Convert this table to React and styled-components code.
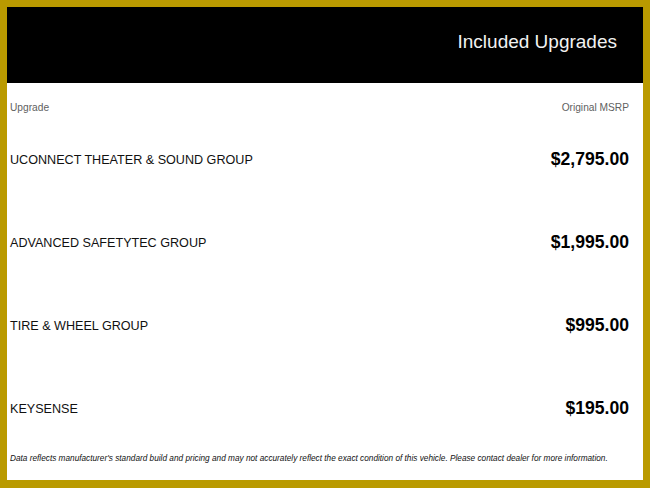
import React from 'react';
import styled, { createGlobalStyle } from 'styled-components';

const GlobalStyle = createGlobalStyle`
  html, body {
    margin: 0;
    padding: 0;
    background: #ba9a00;
  }
`;

const Frame = styled.div`
  box-sizing: border-box;
  width: 650px;
  height: 488px;
  border: 7px solid #ba9a00;
  border-bottom-width: 8px;
  background: #ffffff;
  display: flex;
  flex-direction: column;
`;

const Header = styled.header`
  height: 76px;
  box-sizing: border-box;
  background: #000000;
  display: flex;
  align-items: center;
  justify-content: flex-end;
  padding: 0 26px 6px 0;
  flex-shrink: 0;
`;

const Title = styled.h1`
  margin: 0;
  font-family: "Liberation Sans", Arial, sans-serif;
  font-size: 19px;
  font-weight: 400;
  color: #f2f2f2;
`;

const Table = styled.div`
  display: flex;
  flex-direction: column;
  padding: 0 14px 0 3px;
`;

const ColumnHeads = styled.div`
  height: 34px;
  box-sizing: border-box;
  padding-top: 18px;
  display: flex;
  justify-content: space-between;
  font-family: "Liberation Sans", Arial, sans-serif;
  font-size: 10.2px;
  line-height: 14px;
  color: #5f5f5f;
`;

const Row = styled.div`
  height: 83px;
  display: flex;
  align-items: center;
  justify-content: space-between;
  font-family: "Liberation Sans", Arial, sans-serif;
  color: #111111;
`;

const Name = styled.span`
  font-size: 12.6px;
  padding-top: 2px;
`;

const Price = styled.span`
  font-size: 17.6px;
  font-weight: 700;
  color: #000000;
  padding-top: 2px;
`;

const Disclaimer = styled.p`
  margin: 4px 0 0;
  padding-left: 3px;
  font-family: "Liberation Sans", Arial, sans-serif;
  font-style: italic;
  font-size: 8.25px;
  line-height: 12px;
  white-space: nowrap;
  color: #111111;
`;

const upgrades = [
  { name: 'UCONNECT THEATER & SOUND GROUP', price: '$2,795.00' },
  { name: 'ADVANCED SAFETYTEC GROUP', price: '$1,995.00' },
  { name: 'TIRE & WHEEL GROUP', price: '$995.00' },
  { name: 'KEYSENSE', price: '$195.00' },
];

export default function App() {
  return (
    <>
      <GlobalStyle />
      <Frame>
        <Header>
          <Title>Included Upgrades</Title>
        </Header>
        <Table>
          <ColumnHeads>
            <span>Upgrade</span>
            <span>Original MSRP</span>
          </ColumnHeads>
          {upgrades.map((u) => (
            <Row key={u.name}>
              <Name>{u.name}</Name>
              <Price>{u.price}</Price>
            </Row>
          ))}
        </Table>
        <Disclaimer>
          Data reflects manufacturer's standard build and pricing and may not accurately reflect the exact condition of this vehicle. Please contact dealer for more information.
        </Disclaimer>
      </Frame>
    </>
  );
}
